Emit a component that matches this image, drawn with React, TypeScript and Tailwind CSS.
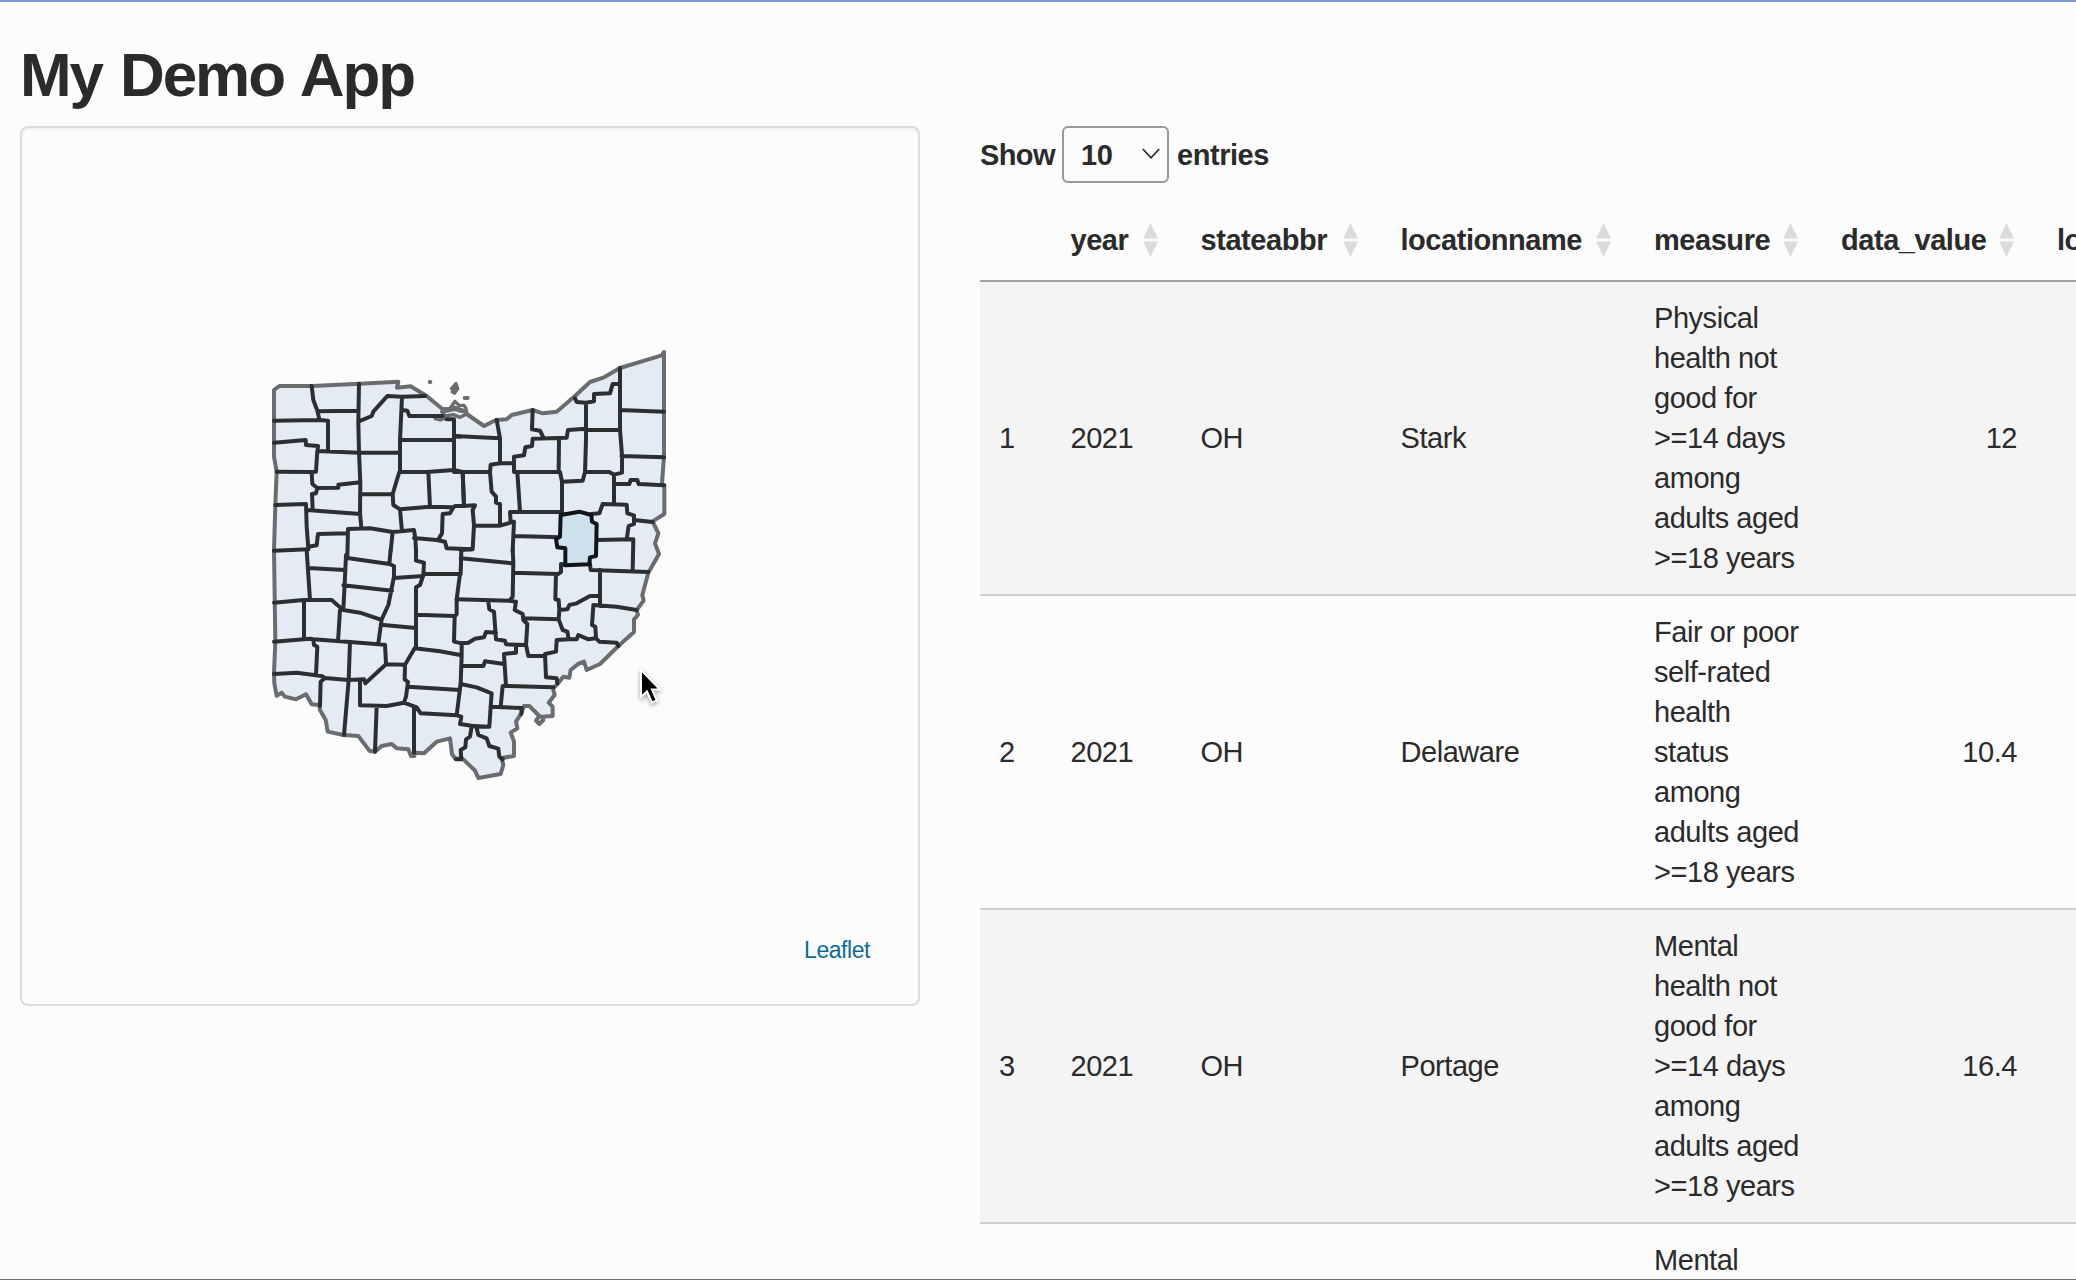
import React from "react";

const OUTLINE =
  "M42 150 58 138 155 138 300 131 415 125 411 143 452 139 500 168 548 208 568 206 585 203 612 213 620 222 672 258 708 240 740 238 755 225 818 210 848 220 890 215 945 168 990 126 1032 112 1080 84 1205 46 1212 36 1212 350 1206 430 1213 436 1213 522 1178 544 1195 580 1185 610 1197 642 1165 698 1147 765 1151 782 1130 810 1134 825 1122 838 1122 876 1075 918 1020 972 980 990 972 965 957 970 932 990 928 1013 910 1010 890 1035 879 1045 884 1065 866 1088 878 1100 878 1128 845 1130 850 1140 838 1152 828 1142 838 1128 808 1098 792 1098 784 1120 768 1145 772 1165 752 1178 762 1205 762 1248 725 1254 730 1275 722 1302 655 1314 645 1292 610 1258 585 1255 576 1242 570 1195 530 1205 492 1240 465 1238 463 1248 453 1248 445 1228 410 1225 395 1212 365 1218 345 1235 328 1232 295 1188 250 1185 203 1175 197 1140 180 1110 178 1095 155 1093 138 1063 108 1078 75 1070 65 1058 50 1067 43 1030 42 1000 46 905 42 630 46 495 50 395 42 350Z";

const NORTHWEST =
  "M155 138 160 180 172 212 178 238M172 214 295 212M42 242 178 240 204 242 204 332M297 131 295 250 297 335 301 430 300 520 304 562M295 245 335 228 340 215 382 168 426 170 495 168M426 170 420 300 420 395M168 395 172 333 297 338 420 338M426 210 442 212 448 228 548 228M42 308 137 300 138 315 174 318 172 340M50 395 155 396 168 395M155 396 157 432 172 444 235 443 235 434 301 427M172 444 168 460 156 462 158 508M46 495 138 492 140 560 145 625M140 510 301 522M145 620 170 616 174 582 262 580M262 652 264 567 330 565 398 576 462 570 466 595 468 632M300 463 398 462 418 396 500 396 582 390 608 396M398 462 400 495 420 508 426 574M420 508 510 500 580 502 585 498 612 498M505 396 510 500M608 396 612 498M580 502 570 520 548 522 546 580 535 598M462 594 530 600 555 605 560 625 635 628M420 300 582 300M560 238 582 238 582 390M582 288 600 290M392 632 398 576M42 632 145 628M604 628 604 632";

const NORTHEAST =
  "M110 240 120 295 120 370M-18 288 120 295M218 210 216 268 240 272 250 292M120 370 162 370M-18 396 90 396M120 370 92 374 90 396 95 455 108 470 108 488 120 492 120 555M162 396 162 350 192 346 196 322 216 318 218 296 320 293 324 270 378 266M162 396 300 396 306 425 306 520M297 295 296 396M345 175 350 186 378 188 402 184 402 162 450 160 458 132 480 132M378 188 378 300 375 396M375 270 480 270M480 84 480 270 486 345 486 398 462 404 448 396 375 396 368 422 306 425M480 210 612 215M484 348 612 352M462 404 462 490M462 432 508 432 512 420 532 420 536 432 612 436M172 396 180 515M8 396 12 498M8 498 45 496 38 510 42 555 38 628 2 630M42 557 120 557 152 548 150 516 302 516M154 545 162 545 158 632M162 588 300 592M394 522 418 520 428 492 500 494 502 520 522 526 522 552 506 558 500 598M410 600 520 598 518 692M522 540 578 546";

const SOUTHWEST =
  "M140 0 150 150M42 158 130 150 215 150 232 165 250 180 300 188 360 208M145 54 255 60M258 15 256 60 250 180M262 24 388 42 402 48 402 80 385 165 365 208 355 280M392 0 388 42M250 106 396 122M402 84 490 78 492 38 468 32 468 0M490 72 602 72 604 -2M490 75 480 105 468 112 468 290M600 72 590 148 590 192 584 200 582 275 605 280M468 194 584 198M362 224 468 234M132 150 132 265M42 275 150 266 160 268 270 276 375 284 378 340M240 180 234 274M160 270 162 285 172 290 168 374M42 372 110 368 185 378 195 384 265 390 312 388 316 400 378 343 435 344M270 276 266 390 252 555M195 384 182 395 180 468M300 390 300 466 380 468 432 458 470 472 482 490 590 496 604 500 600 522 640 528M435 344 464 295 540 304 605 316M435 344 434 388 444 396 438 440 432 458M444 410 600 420M605 280 605 316 602 400 590 496M350 468 345 605M462 472 462 608";

const SOUTHEAST =
  "M158 0 160 35 158 140 148 152 168 155 164 180 188 192 190 210 202 222 198 285 205 318 250 318M2 25 158 40M160 68 295 72 303 66 303 42 316 45M390 42 392 60 565 66M420 60 420 168M288 72 286 148 296 150 298 180 322 178 328 165 350 160 390 138 420 138M400 165 470 170 530 180M400 168 396 225 406 230 408 265 418 275 470 278 475 288M190 205 296 208 298 180M296 208 308 240 322 245 326 268 350 268 355 255 385 268 408 265M326 268 290 270 288 305 255 312 258 382 290 385 292 400M-10 148 148 152M85 155 88 178 102 185 108 268 135 272 138 283 198 285M108 248 78 246 72 262 45 266 25 278 5 280M168 288 168 308 132 312 138 408 280 412M132 342 75 334 70 348 5 348M138 408 128 408 122 470M2 402 50 412 95 430 92 470 88 530 40 528M92 470 185 474 184 492M35 530 30 560 18 568 16 592 2 600 4 628 -12 628M50 535 55 555 80 565 88 588 115 596 118 620 128 628";

const HOVERED =
  "M902 525 958 515 994 525 996 545 1010 552 1008 648 990 652 988 673 916 676 916 625 892 622 888 597 900 590Z";

const LAKE_SHORE =
  "M548 208 570 205 585 184 597 196 612 196 618 205 620 222M555 214 585 208 605 214 620 214M525 236 540 240 552 236M545 215 556 228 580 224 600 232 620 222";

function OhioMap() {
  return (
    <svg
      className="block h-[450px] w-[420px]"
      viewBox="0 0 1260 1350"
      fill="none"
      strokeWidth="12"
      strokeLinejoin="round"
      strokeLinecap="round"
    >
      <path d={OUTLINE} fill="#e5ebf3" stroke="#6a6d70" />
      <path d={LAKE_SHORE} stroke="#6a6d70" strokeWidth="10" />
      <path d="M509 126h2M614 174h9" stroke="#6a6d70" />
      <path d="M588 130 594 146 584 160 576 156 583 152 574 146Z" fill="#6a6d70" stroke="#6a6d70" strokeWidth="9" />
      <g stroke="#2a2f32">
        <path d={NORTHWEST} />
        <path d={NORTHEAST} transform="translate(600 0)" />
        <path d={SOUTHWEST} transform="translate(0 630)" />
        <path d={SOUTHEAST} transform="translate(600 630)" />
      </g>
      <path d={HOVERED} fill="#d0e1ee" stroke="#0f1519" />
    </svg>
  );
}

function Cursor() {
  return (
    <svg
      className="absolute left-[636px] top-[664px] h-[44px] w-[28px] drop-shadow-[0_2px_2px_rgba(0,0,0,0.35)]"
      viewBox="0 0 28 44"
    >
      <path d="M5 4V31L11 25.5L15.8 36.5L20.8 34.5L16 23.5H24Z" fill="#000" stroke="#fff" strokeWidth="2" />
    </svg>
  );
}

function SortIcon() {
  return (
    <svg className="block h-[34px] w-[15px] shrink-0" viewBox="0 0 15 34" fill="#dcdcdc">
      <path d="M7.5 0 15 15.5H0ZM0 18.5H15L7.5 34Z" />
    </svg>
  );
}

const COLUMNS = "grid w-[1240px] grid-cols-[70.5px_130px_200px_253.5px_187px_216px_183px]";

const HEADERS = ["year", "stateabbr", "locationname", "measure", "data_value"];

const ROWS = [
  {
    location: "Stark",
    measure: ["Physical", "health not", "good for", ">=14 days", "among", "adults aged", ">=18 years"],
    value: "12",
  },
  {
    location: "Delaware",
    measure: ["Fair or poor", "self-rated", "health", "status", "among", "adults aged", ">=18 years"],
    value: "10.4",
  },
  {
    location: "Portage",
    measure: ["Mental", "health not", "good for", ">=14 days", "among", "adults aged", ">=18 years"],
    value: "16.4",
  },
];

function DataTable() {
  return (
    <section className="w-[1096px] shrink-0 overflow-hidden">
      <div className="flex h-[57px] items-center font-bold">
        <span className="w-[82px] pt-px tracking-[-0.6px]">Show</span>
        <div className="flex h-[57px] w-[107px] items-center justify-between rounded-[6px] border-2 border-[#999] pl-[17px] pr-[7px]">
          <span className="pt-px">10</span>
          <svg className="mt-[-2px] h-3 w-[18px]" viewBox="0 0 18 12" fill="none" stroke="#2b2b2b" strokeWidth="1.8">
            <path d="M0.8 1 9 9.8 17.2 1" />
          </svg>
        </div>
        <span className="ml-2 pt-px">entries</span>
      </div>
      <div className={`${COLUMNS} mt-[17px] h-[82px] items-center border-b-2 border-[#a3a3a3] font-bold`}>
        <span />
        {HEADERS.map((label) => (
          <div key={label} className="flex items-center justify-between pl-5 pr-[23px]">
            <span>{label}</span>
            <SortIcon />
          </div>
        ))}
        <span className="pl-5">locationid</span>
      </div>
      {ROWS.map((row, index) => (
        <div
          key={row.location}
          className={`${COLUMNS} items-center py-4 ${index % 2 === 0 ? "bg-[#f4f4f4]" : ""} ${
            index > 0 ? "border-t-2 border-[#d0d0d0]" : ""
          }`}
        >
          <span className="pl-[19px]">{index + 1}</span>
          <span className="pl-5">2021</span>
          <span className="pl-5">OH</span>
          <span className="pl-5">{row.location}</span>
          <span className="whitespace-nowrap pl-5">
            {row.measure.map((line) => (
              <span key={line} className="block">
                {line}
              </span>
            ))}
          </span>
          <span className="pr-5 text-right">{row.value}</span>
        </div>
      ))}
      <div className={`${COLUMNS} border-t-2 border-[#d0d0d0] pt-4`}>
        <span className="col-start-5 pl-5">Mental</span>
      </div>
    </section>
  );
}

export default function App() {
  return (
    <div className="relative h-[1280px] w-[2076px] overflow-hidden border-b border-t-2 border-b-[#707070] border-t-[#7b9bd0] bg-[#fcfcfc] font-['Liberation_Sans',Arial,sans-serif] text-[29px] leading-[40px] tracking-[-0.45px] text-[#2b2b2b]">
      <h2 className="ml-5 mt-10 h-[66px] text-[62px] font-bold leading-[66px] tracking-[-2.1px] [word-spacing:3px]">
        My Demo App
      </h2>
      <div className="mt-[18px] flex items-start gap-[60px] pl-5">
        <aside className="flex h-[880px] w-[900px] shrink-0 flex-col rounded-[8px] border-2 border-[#dcdcdc] pl-[238px] pr-[48px] pt-[212px] shadow-[inset_0_2px_2px_rgba(0,0,0,0.05)]">
          <OhioMap />
          <span className="mt-[144px] self-end text-[23px] leading-[32px] text-[#0e6a9a]">Leaflet</span>
        </aside>
        <DataTable />
      </div>
      <Cursor />
    </div>
  );
}
